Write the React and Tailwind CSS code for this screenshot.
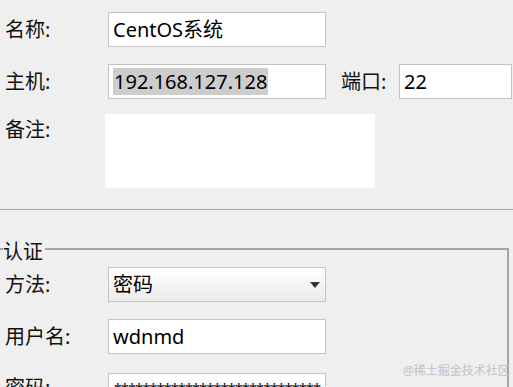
import React from "react";

const font = { fontFamily: '"Noto Sans", "Noto Sans CJK SC", sans-serif' };

function Label({ children, className = "w-[108px]" }) {
  return <div className={`${className} shrink-0 pl-[5px] text-[20px] text-[#111]`}>{children}</div>;
}

function TextBox({ children, className = "w-[218px]" }) {
  return (
    <div className={`${className} h-[35px] shrink-0 border border-[#c4c4c4] bg-white px-[4px] flex items-center text-[20px] text-black whitespace-nowrap overflow-hidden`}>
      {children}
    </div>
  );
}

export default function App() {
  return (
    <div className="relative w-[513px] h-[387px] overflow-hidden bg-[#efefef]" style={font}>
      <div className="pt-[12px]">
        <div className="flex items-center">
          <Label>名称:</Label>
          <TextBox>CentOS系统</TextBox>
        </div>

        <div className="flex items-center mt-[17px]">
          <Label>主机:</Label>
          <TextBox>
            <span className="bg-[#cdcdcd] leading-[27px] px-[1px]">192.168.127.128</span>
          </TextBox>
          <div className="ml-[15px] w-[58px] text-[20px] text-[#111]">端口:</div>
          <TextBox className="w-[113px]">22</TextBox>
        </div>

        <div className="flex items-start mt-[15px]">
          <Label className="w-[105px] pt-[1px]">备注:</Label>
          <div className="w-[270px] h-[74px] bg-white" />
        </div>
      </div>

      <div className="mt-[21px] h-px bg-[#a8a8a8]" />

      <fieldset className="mt-[22px] w-[509px] h-[200px] border-t-2 border-r-2 border-[#a4a4a4]">
        <legend className="ml-[3px] pt-[6px] pr-[2px] text-[20px] text-[#111] leading-[27px]">认证</legend>

        <div className="flex items-center mt-[2px]">
          <Label>方法:</Label>
          <div className="w-[218px] h-[35px] border border-[#c4c4c4] bg-gradient-to-b from-white to-[#ebebeb] px-[4px] flex items-center justify-between text-[20px] text-black">
            <span>密码</span>
            <svg width="10" height="6" viewBox="0 0 10 6" className="mr-[1px]">
              <path d="M0 0 H10 L5 6 Z" fill="#333" />
            </svg>
          </div>
        </div>

        <div className="flex items-center mt-[17px]">
          <Label>用户名:</Label>
          <TextBox>wdnmd</TextBox>
        </div>

        <div className="flex items-start mt-[19px]">
          <Label>密码:</Label>
          <div className="w-[218px] h-[35px] shrink-0 border border-[#c4c4c4] bg-white px-[5px] pt-[8px] overflow-hidden whitespace-nowrap text-[14px] leading-[14px] tracking-[-0.6px] text-black">
            {"*".repeat(29)}
          </div>
        </div>
      </fieldset>

      <div className="absolute left-[403px] top-[362px] text-[12px] text-[#c2c2c2] whitespace-nowrap">
        @稀土掘金技术社区
      </div>
    </div>
  );
}
